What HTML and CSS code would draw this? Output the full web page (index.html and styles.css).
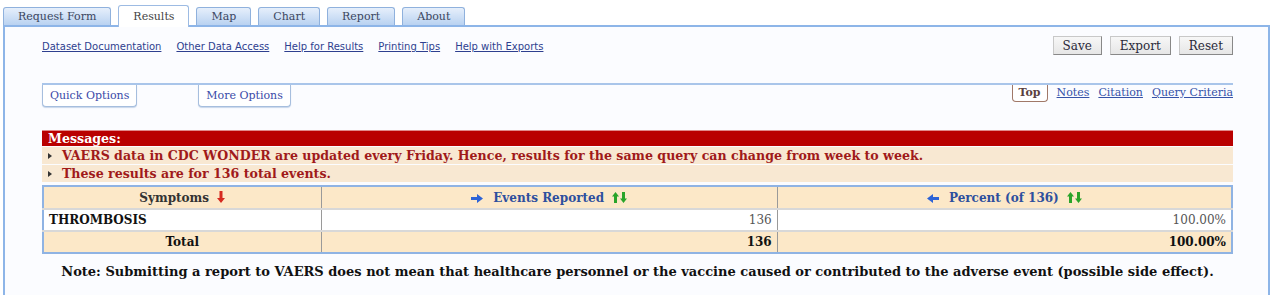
FILE: index.html
```html
<!DOCTYPE html>
<html lang="en">

<head>
  <meta charset="UTF-8">
  <title>VAERS Results</title>
  <link rel="stylesheet" href="styles.css">
</head>

<body>
  <div class="tabs">
    <a class="tab">Request Form</a>
    <a class="tab tab--active">Results</a>
    <a class="tab">Map</a>
    <a class="tab">Chart</a>
    <a class="tab">Report</a>
    <a class="tab">About</a>
  </div>

  <div class="panel">
    <div class="toolbar">
      <div class="toolbar__links">
        <a href="#">Dataset Documentation</a>
        <a href="#">Other Data Access</a>
        <a href="#">Help for Results</a>
        <a href="#">Printing Tips</a>
        <a href="#">Help with Exports</a>
      </div>
      <div class="toolbar__buttons">
        <button class="btn">Save</button>
        <button class="btn">Export</button>
        <button class="btn">Reset</button>
      </div>
    </div>

    <div class="options">
      <div class="options__left">
        <button class="opt-btn">Quick Options</button>
        <button class="opt-btn">More Options</button>
      </div>
      <div class="options__right">
        <span class="top-btn">Top</span>
        <a href="#">Notes</a>
        <a href="#">Citation</a>
        <a href="#">Query Criteria</a>
      </div>
    </div>

    <div class="messages">
      <div class="messages__title">Messages:</div>
      <div class="messages__item"><span class="marker"></span>VAERS data in CDC WONDER are updated every Friday. Hence, results for the same query can change from week to week.</div>
      <div class="messages__item"><span class="marker"></span>These results are for 136 total events.</div>
    </div>

    <table class="results">
      <colgroup>
        <col class="col-first">
        <col>
        <col>
      </colgroup>
      <tr class="results__head">
        <th>Symptoms
          <svg class="ico" width="8" height="12" viewBox="0 0 8 12"><path d="M2.5 0h3v7H8l-4 5-4-5h2.5z" fill="#d62a20"/></svg>
        </th>
        <th class="sortable">
          <svg class="ico ico--side" width="12" height="9" viewBox="0 0 12 9"><path d="M0 3h6V0l6 4.5-6 4.5V6H0z" fill="#2d63d6"/></svg>
          Events Reported
          <svg class="ico" width="15" height="11" viewBox="0 0 15 11"><path d="M3.5 0L7 4.5H5V11H2V4.5H0z" fill="#2aa42a"/><path d="M10 0h3v6.5h2L11.5 11 8 6.5h2z" fill="#2aa42a"/></svg>
        </th>
        <th class="sortable">
          <svg class="ico ico--side" width="12" height="9" viewBox="0 0 12 9"><path d="M12 3H6V0L0 4.5 6 9V6h6z" fill="#2d63d6"/></svg>
          Percent (of 136)
          <svg class="ico" width="15" height="11" viewBox="0 0 15 11"><path d="M3.5 0L7 4.5H5V11H2V4.5H0z" fill="#2aa42a"/><path d="M10 0h3v6.5h2L11.5 11 8 6.5h2z" fill="#2aa42a"/></svg>
        </th>
      </tr>
      <tr class="results__row">
        <td class="label">THROMBOSIS</td>
        <td class="num">136</td>
        <td class="num">100.00%</td>
      </tr>
      <tr class="results__total">
        <td class="label label--center">Total</td>
        <td class="num">136</td>
        <td class="num">100.00%</td>
      </tr>
    </table>

    <p class="note">Note: Submitting a report to VAERS does not mean that healthcare personnel or the vaccine caused or contributed to the adverse event (possible side effect).</p>
  </div>
</body>

</html>
```

FILE: styles.css
```css
    body {
      margin: 0;
      background: #fff;
      font-family: "DejaVu Serif", serif;
      font-size: 12px;
      color: #222;
    }

    .tabs {
      display: flex;
      align-items: flex-end;
      gap: 7px;
      height: 25px;
      padding-left: 3px;
    }

    .tab {
      box-sizing: border-box;
      height: 18px;
      line-height: 17px;
      padding: 0 14px;
      border: 1px solid #8fb1dd;
      border-bottom: none;
      border-radius: 3px 3px 0 0;
      background: linear-gradient(#e6effb, #b9d2f1);
      font-size: 11px;
      color: #3b4660;
      white-space: nowrap;
    }

    .tab--active {
      position: relative;
      z-index: 1;
      height: 22px;
      line-height: 21px;
      margin-bottom: -2px;
      background: #fff;
      border-color: #9dbbe3;
      color: #444;
    }

    .panel {
      box-sizing: border-box;
      min-height: 290px;
      margin: 0 10px 0 3px;
      padding: 0 35px 0 37px;
      border: 2px solid #8db5e8;
      border-bottom: none;
      background: #fbfcff;
    }

    .toolbar {
      display: flex;
      justify-content: space-between;
      align-items: center;
      margin-top: 9px;
      height: 19px;
    }

    .toolbar__links {
      display: flex;
      gap: 15px;
      margin-top: 2px;
      font-family: "DejaVu Sans", sans-serif;
      font-size: 10px;
    }

    .toolbar__links a {
      color: #2e3f8f;
    }

    .toolbar__buttons {
      display: flex;
      gap: 8px;
    }

    .btn {
      height: 19px;
      padding: 0 9px;
      border: 1px solid;
      border-color: #c8c8c8 #888 #888 #c8c8c8;
      background: linear-gradient(#f7f7f7, #e6e6e6);
      font-family: "DejaVu Serif", serif;
      font-size: 12px;
      color: #2a2a3a;
    }

    .options {
      display: flex;
      justify-content: space-between;
      align-items: flex-start;
      margin-top: 28px;
      border-top: 2px solid #a9c5ea;
    }

    .options__left {
      display: flex;
      gap: 61px;
    }

    .opt-btn {
      height: 22px;
      padding: 0 7px;
      border: 1px solid #a6bede;
      border-top: none;
      border-radius: 0 0 4px 4px;
      background: #fff;
      box-shadow: 0 1px 1px #c8d6ea;
      font-family: "DejaVu Serif", serif;
      font-size: 11px;
      color: #3a4aa8;
    }

    .options__right {
      display: flex;
      align-items: flex-start;
      gap: 9px;
      font-size: 11px;
    }

    .options__right a {
      color: #3552a8;
      margin-top: 1px;
    }

    .top-btn {
      height: 16px;
      line-height: 15px;
      padding: 0 6px;
      border: 1px solid #a07868;
      border-top: none;
      border-radius: 0 0 4px 4px;
      background: #fff;
      font-weight: bold;
      color: #5a4040;
    }

    .messages {
      margin-top: 23px;
      font-weight: bold;
      font-size: 12.6px;
    }

    .messages__title {
      height: 15px;
      line-height: 15px;
      padding-left: 6px;
      background: #b90000;
      color: #fff;
      border-top: 1px solid #e08a8a;
    }

    .messages__item {
      display: flex;
      align-items: center;
      height: 17px;
      margin-top: 1px;
      padding-left: 6px;
      background: #f8e8d2;
      color: #a01a1a;
    }

    .marker {
      width: 0;
      height: 0;
      margin-right: 10px;
      border-left: 4px solid #333;
      border-top: 3px solid transparent;
      border-bottom: 3px solid transparent;
    }

    .results {
      width: 100%;
      margin-top: 3px;
      border-collapse: collapse;
      border: 2px solid #8fb3e3;
      font-size: 12px;
    }

    .col-first {
      width: 278px;
    }

    .results td,
    .results th {
      padding: 0 5px;
      border-left: 1px solid #9a9a9a;
      border-top: 2px solid #d8d8d8;
    }

    .results__head th {
      height: 21px;
      background: #fce8c8;
      color: #333;
      border-top: none;
    }

    .results__head th.sortable {
      color: #2d4f9e;
    }

    .ico {
      vertical-align: -1px;
      margin-left: 4px;
    }

    .ico--side {
      margin: 0 6px 0 0;
    }

    .results__row td {
      height: 20px;
      background: #fff;
    }

    .results__total td {
      height: 20px;
      background: #fce8c8;
      font-weight: bold;
    }

    .label {
      font-weight: bold;
      color: #111;
    }

    .label--center {
      text-align: center;
    }

    .num {
      text-align: right;
      color: #555;
    }

    .results__total .num {
      color: #111;
    }

    .note {
      margin: 10px 0 0;
      text-align: center;
      font-weight: bold;
      font-size: 13px;
      color: #111;
    }
```
